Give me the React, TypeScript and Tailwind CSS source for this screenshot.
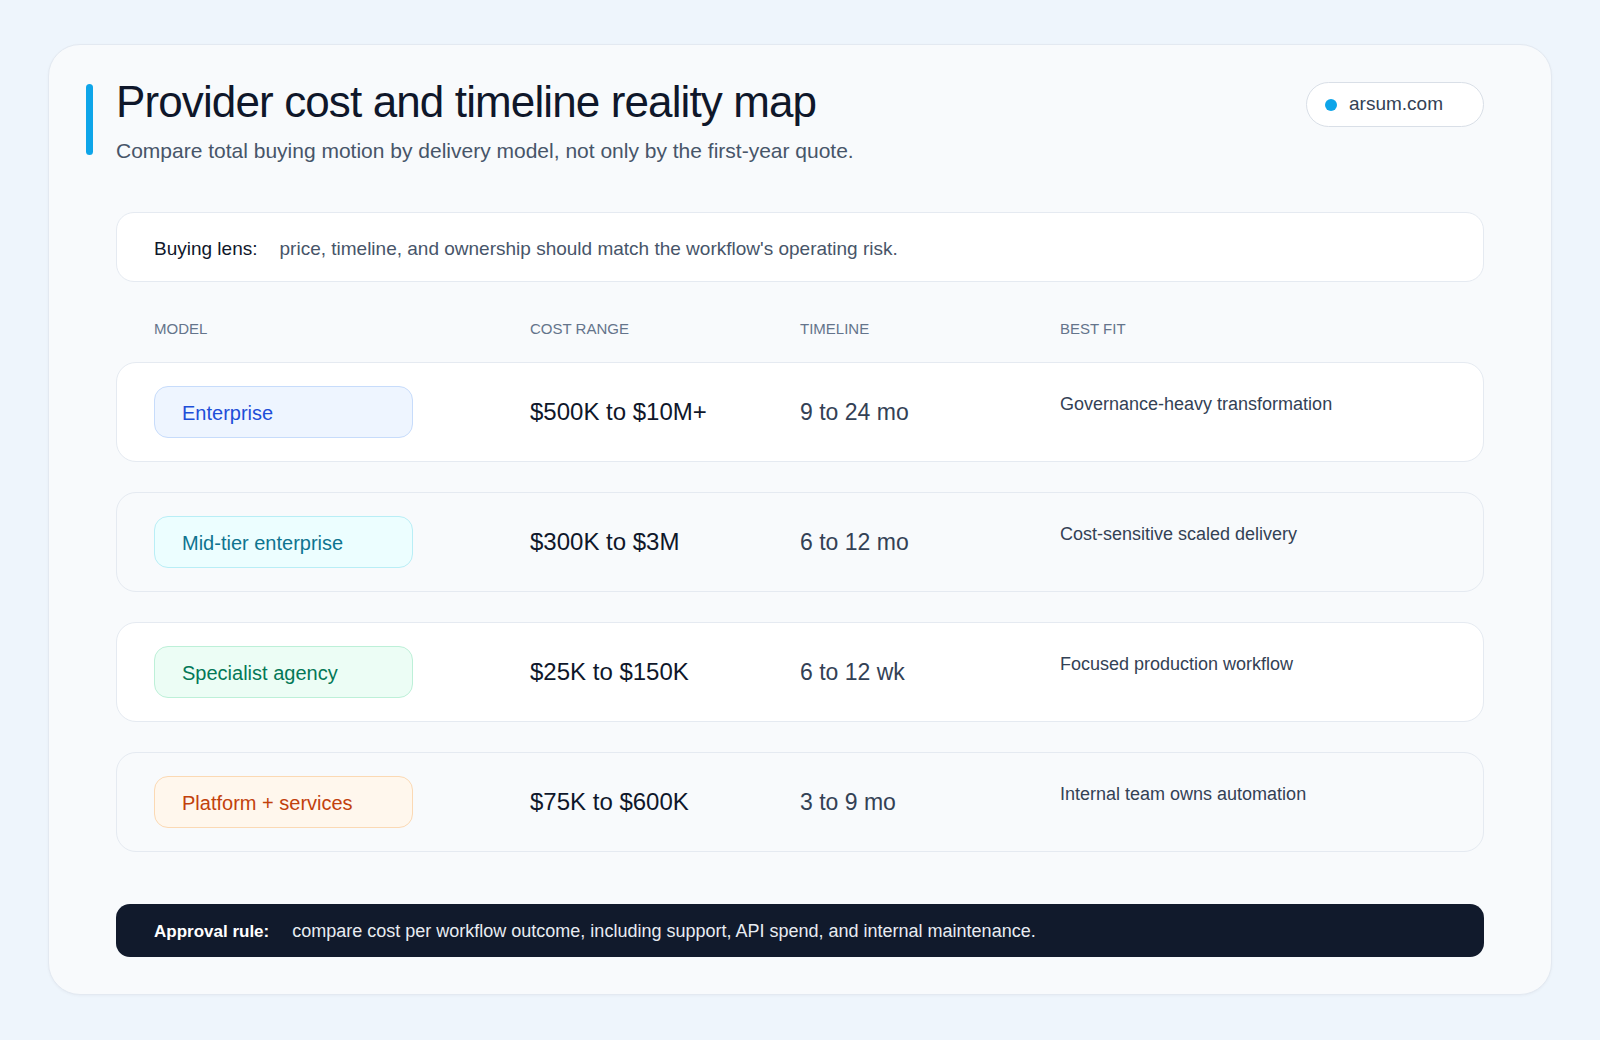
import React from 'react';

interface ProviderRow {
  model: string;
  cost: string;
  timeline: string;
  bestFit: string;
  badge: string;
  row: string;
}

const rows: ProviderRow[] = [
  {
    model: 'Enterprise',
    cost: '$500K to $10M+',
    timeline: '9 to 24 mo',
    bestFit: 'Governance-heavy transformation',
    badge: 'bg-[#eef5ff] border-[#c7dcfb] text-[#1d4ed8]',
    row: 'bg-white',
  },
  {
    model: 'Mid-tier enterprise',
    cost: '$300K to $3M',
    timeline: '6 to 12 mo',
    bestFit: 'Cost-sensitive scaled delivery',
    badge: 'bg-[#ecfeff] border-[#b9eef6] text-[#0e7490]',
    row: 'bg-[#f8fafc]',
  },
  {
    model: 'Specialist agency',
    cost: '$25K to $150K',
    timeline: '6 to 12 wk',
    bestFit: 'Focused production workflow',
    badge: 'bg-[#ecfdf5] border-[#bdf0d8] text-[#047857]',
    row: 'bg-white',
  },
  {
    model: 'Platform + services',
    cost: '$75K to $600K',
    timeline: '3 to 9 mo',
    bestFit: 'Internal team owns automation',
    badge: 'bg-[#fff7ed] border-[#fbd9b4] text-[#c2410c]',
    row: 'bg-[#f8fafc]',
  },
];

const App = () => {
  return (
    <div className="min-h-screen bg-[#eef5fc] px-12 pt-[44px] pb-[45px] font-['Liberation_Sans',Arial,sans-serif]">
      <div className="rounded-[32px] border border-[#e3e9f1] bg-[#f8fafc] px-[67px] pt-[33px] pb-[37px] shadow-[0_1px_3px_rgba(15,23,42,0.04)]">
        {/* header */}
        <div className="flex items-start justify-between">
          <div className="-ml-[30px] flex items-start gap-[23px]">
            <div className="mt-[6px] h-[71px] w-[7px] rounded-full bg-[#0ea5e9]" />
            <div>
              <h1 className="text-[44px] leading-[48px] tracking-[-0.02em] text-[#0f172a]">
                Provider cost and timeline reality map
              </h1>
              <p className="mt-[11px] text-[21px] leading-[28px] text-[#475569]">
                Compare total buying motion by delivery model, not only by the first-year quote.
              </p>
            </div>
          </div>
          <div className="mt-[4px] flex h-[45px] w-[178px] items-center gap-[12px] rounded-full border border-[#d9dfe7] bg-white pl-[18px]">
            <span className="h-[12px] w-[12px] rounded-full bg-[#0ea5e9]" />
            <span className="text-[19px] text-[#334155]">arsum.com</span>
          </div>
        </div>

        {/* buying lens */}
        <div className="mt-[47px] flex h-[70px] items-center gap-[22px] rounded-[18px] border border-[#e5eaf1] bg-white pl-[37px] pt-[4px]">
          <span className="text-[19px] text-[#0f172a]">Buying lens:</span>
          <span className="text-[19px] text-[#475569]">
            price, timeline, and ownership should match the workflow's operating risk.
          </span>
        </div>

        {/* column labels */}
        <div className="mt-[37px] grid grid-cols-[376px_270px_260px_1fr] pl-[38px] text-[15px] leading-5 text-[#64748b]">
          <span>MODEL</span>
          <span>COST RANGE</span>
          <span>TIMELINE</span>
          <span>BEST FIT</span>
        </div>

        <div className="mt-[23px] flex flex-col gap-[30px]">
          {rows.map((r) => (
            <div
              key={r.model}
              className={`grid h-[100px] grid-cols-[376px_270px_260px_1fr] items-center rounded-[20px] border border-[#e5eaf1] pl-[37px] ${r.row}`}
            >
              <div
                className={`flex h-[52px] w-[259px] items-center rounded-[14px] border pl-[27px] pt-[1px] text-[20px] ${r.badge}`}
              >
                {r.model}
              </div>
              <div className="text-[24px] text-[#0f172a]">{r.cost}</div>
              <div className="text-[23px] text-[#334155]">{r.timeline}</div>
              <div className="self-start pt-[27px] text-[18px] leading-7 text-[#334155]">{r.bestFit}</div>
            </div>
          ))}
        </div>

        {/* approval rule */}
        <div className="mt-[52px] flex h-[53px] items-center gap-[23px] rounded-[14px] bg-[#111a2c] pl-[38px] pt-[2px] text-white">
          <span className="text-[17px] font-bold">Approval rule:</span>
          <span className="text-[18px] text-[#e8ecf2]">
            compare cost per workflow outcome, including support, API spend, and internal maintenance.
          </span>
        </div>
      </div>
    </div>
  );
};

export default App;
